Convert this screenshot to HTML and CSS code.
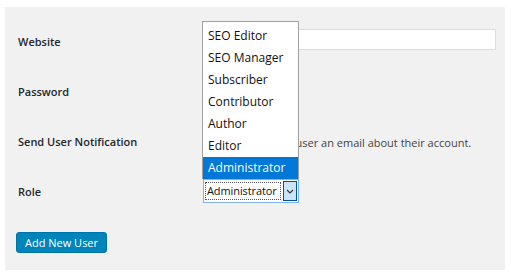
FILE: index.html
```html
<!DOCTYPE html>
<html lang="en">
<head>
    <meta charset="UTF-8">
    <title>Add New User</title>
    <link rel="stylesheet" href="styles.css">
</head>
<body>
    <div class="panel">
        <div class="form-table">
            <div class="row">
                <div class="label">Website</div>
                <div class="field"><input type="text" class="text-input"></div>
            </div>
            <div class="row">
                <div class="label">Password</div>
                <div class="field"></div>
            </div>
            <div class="row">
                <div class="label">Send User Notification</div>
                <div class="field">
                    <span class="checkbox"></span>
                    <span class="note">Send the new user an email about their account.</span>
                </div>
            </div>
            <div class="row">
                <div class="label">Role</div>
                <div class="field">
                    <div class="select">
                        <span class="select-value">Administrator</span>
                        <span class="select-arrow">
                            <svg width="8" height="5" viewBox="0 0 8 5"><path d="M1 1l3 3 3-3" fill="none" stroke="#333" stroke-width="1.1"/></svg>
                        </span>

                        <!-- liste ouverte -->
                        <ul class="options">
                            <li>SEO Editor</li>
                            <li>SEO Manager</li>
                            <li>Subscriber</li>
                            <li>Contributor</li>
                            <li>Author</li>
                            <li>Editor</li>
                            <li class="selected">Administrator</li>
                        </ul>
                    </div>
                </div>
            </div>
        </div>

        <button class="button-primary">Add New User</button>
    </div>
</body>
</html>
```

FILE: styles.css
```css
body {
    margin: 0;
    background: #ffffff;
    font-family: "Open Sans", "Noto Sans", sans-serif;
    color: #23282d;
}

.panel {
    margin: 7px 6px 0 5px;
    height: 263px;
    background: #f1f1f1;
    padding: 9px 0 0 11px;
    box-sizing: border-box;
}

.form-table {
    display: flex;
    flex-direction: column;
    padding-left: 2px;
}

.row {
    display: flex;
    align-items: center;
    height: 50px;
}

.label {
    width: 184px;
    font-size: 11px;
    font-weight: 600;
    color: #23282d;
}

.field {
    flex: 1;
    display: flex;
    align-items: center;
    padding-right: 9px;
}

.text-input {
    width: 100%;
    height: 21px;
    margin: 0;
    margin-top: -4px;
    border: 1px solid #dddddd;
    background: #ffffff;
    box-sizing: border-box;
}

.checkbox {
    width: 14px;
    height: 14px;
    margin: 2px 5px 0 2px;
    border: 1px solid #b4b9be;
    background: #ffffff;
    box-sizing: border-box;
}

.note {
    font-size: 11px;
    color: #444;
    margin-top: 2px;
}

.select {
    position: relative;
    display: flex;
    align-items: center;
    width: 96px;
    height: 24px;
    margin-left: 1px;
    border: 1px solid #7eb4ea;
    background: #ffffff;
    box-sizing: border-box;
    font-size: 11px;
}

.select-value {
    flex: 1;
    min-width: 0;
    overflow: hidden;
    margin: 2px 2px 2px 1px;
    padding: 0 1px;
    border: 1px dotted #555;
    line-height: 16px;
    letter-spacing: -0.1px;
    white-space: nowrap;
    color: #111;
}

.select-arrow {
    flex: none;
    width: 14px;
    height: 20px;
    margin-right: 1px;
    display: flex;
    align-items: center;
    justify-content: center;
    background: #cce4f7;
    border: 1px solid #005499;
    box-sizing: border-box;
}

.options {
    position: absolute;
    left: -2px;
    bottom: 23px;
    width: 97px;
    margin: 0;
    padding: 3px 0 0;
    list-style: none;
    background: #ffffff;
    border: 1px solid #a0a0a0;
    border-bottom: none;
    box-sizing: border-box;
}

.options li {
    height: 22px;
    line-height: 22px;
    padding-left: 5px;
    font-size: 12px;
    color: #111;
    white-space: nowrap;
}

.options li.selected {
    background: #0078d7;
    color: #ffffff;
}

.button-primary {
    margin-top: 16px;
    padding: 0 8px;
    height: 21px;
    background: #0085ba;
    border: 1px solid #0073aa;
    border-radius: 3px;
    color: #ffffff;
    font-family: "Open Sans", "Noto Sans", sans-serif;
    font-size: 11px;
    cursor: pointer;
}
```
